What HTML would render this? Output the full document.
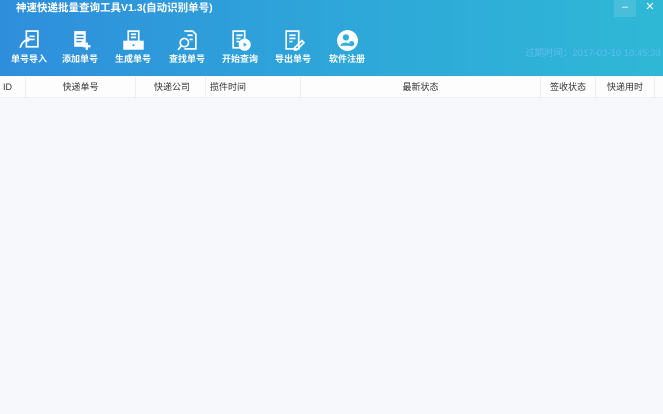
<!DOCTYPE html>
<html><head><meta charset="utf-8"><style>
*{margin:0;padding:0;box-sizing:border-box}
body{width:663px;height:414px;overflow:hidden;background:#f6f8fb;font-family:"Liberation Sans","Noto Sans CJK SC",sans-serif;position:relative}
.top{position:absolute;left:0;top:0;width:663px;height:76px;background:linear-gradient(90deg,#2f8edc 0%,#2ea6d9 50%,#2fb8d6 100%)}
.title{position:absolute;left:16px;top:1px;color:#fff;font-size:10.5px;font-weight:bold;line-height:14px}
.btn{position:absolute;top:29px;width:50px;text-align:center;color:#fff;font-size:9px;font-weight:bold}
.btn svg{display:block;margin:0 auto 2px;width:23px;height:23px}
.btn span{display:block;line-height:11px;margin-top:0}
.exp{position:absolute;left:525px;top:45px;color:#5fbdf0;font-size:9.5px}
.wc{position:absolute;top:0;width:22px;height:17px;color:#fff;font-size:11px;text-align:center;line-height:15px}
.th{position:absolute;top:77px;left:0;width:663px;height:21px;background:#fdfdfe;border-bottom:1px solid #eef0f3;font-size:9px;color:#333}
.th div{position:absolute;top:0;height:21px;line-height:21px;text-align:center;border-right:1px solid #eceef1}
</style></head><body>
<div class="top">
<div class="title">神速快递批量查询工具V1.3(自动识别单号)</div>
<div class="wc" style="left:614px;background:rgba(255,255,255,0.12)">–</div>
<div class="wc" style="left:639px">✕</div>
<div class="btn" style="left:4px"><svg viewBox="0 0 22 22" fill="none" stroke="#fff" stroke-width="1.6"><rect x="8" y="2" width="11" height="15"/><path d="M11 7h5M11 10h5M2 18c2-6 5-8 9-8l-2-2M11 10l-2 2"/></svg><span>单号导入</span></div>
<div class="btn" style="left:55px"><svg viewBox="0 0 22 22"><rect x="5" y="2" width="11" height="15" fill="#fff"/><path d="M7 6h7M7 9h7M7 12h5" stroke="#2f8edc" stroke-width="1.3"/><path d="M17 13v7M13.5 16.5h7" stroke="#fff" stroke-width="2.2"/></svg><span>添加单号</span></div>
<div class="btn" style="left:108px"><svg viewBox="0 0 22 22" fill="none" stroke="#fff" stroke-width="1.6"><rect x="6" y="2" width="10" height="10"/><path d="M8.5 5h5M8.5 8h5"/><rect x="2" y="12" width="18" height="7" fill="#fff"/><circle cx="11" cy="15.5" r="1" fill="#2fa0da" stroke="none"/></svg><span>生成单号</span></div>
<div class="btn" style="left:162px"><svg viewBox="0 0 22 22" fill="none" stroke="#fff" stroke-width="1.6"><path d="M8 2h8l3 3v14H8"/><path d="M11 6h5M13 10h3"/><circle cx="8" cy="13" r="4"/><path d="M5 16l-3 4"/></svg><span>查找单号</span></div>
<div class="btn" style="left:215px"><svg viewBox="0 0 22 22" fill="none" stroke="#fff" stroke-width="1.6"><rect x="4" y="2" width="11" height="16"/><path d="M7 6h6M7 9h4M7 12h3"/><circle cx="15" cy="15" r="5" fill="#fff"/><path d="M14 13v4l3-2z" fill="#2fa6d9" stroke="none"/></svg><span>开始查询</span></div>
<div class="btn" style="left:268px"><svg viewBox="0 0 22 22" fill="none" stroke="#fff" stroke-width="1.6"><rect x="4" y="2" width="12" height="17"/><path d="M7 6h6M7 9h6M7 12h3M12 18l7-7 2 2-7 7h-2z"/></svg><span>导出单号</span></div>
<div class="btn" style="left:322px"><svg viewBox="0 0 22 22"><circle cx="11" cy="11" r="10" fill="#fff"/><circle cx="9.5" cy="8" r="3" fill="#2fb0d8"/><path d="M4 16c1-4 9-4 10 0z" fill="#2fb0d8"/><circle cx="15" cy="14" r="2.5" fill="#2fb0d8"/></svg><span>软件注册</span></div>
<div class="exp">过期时间：2017-03-10 10:45:33</div>
</div>
<div class="th">
<div style="left:0;width:26px;text-align:left;padding-left:3px">ID</div>
<div style="left:26px;width:110px">快递单号</div>
<div style="left:136px;width:70px;text-align:right;padding-right:15px">快递公司</div>
<div style="left:206px;width:95px;text-align:left;padding-left:4px">揽件时间</div>
<div style="left:301px;width:240px">最新状态</div>
<div style="left:541px;width:55px">签收状态</div>
<div style="left:596px;width:59px">快递用时</div>
</div>
</body></html>
